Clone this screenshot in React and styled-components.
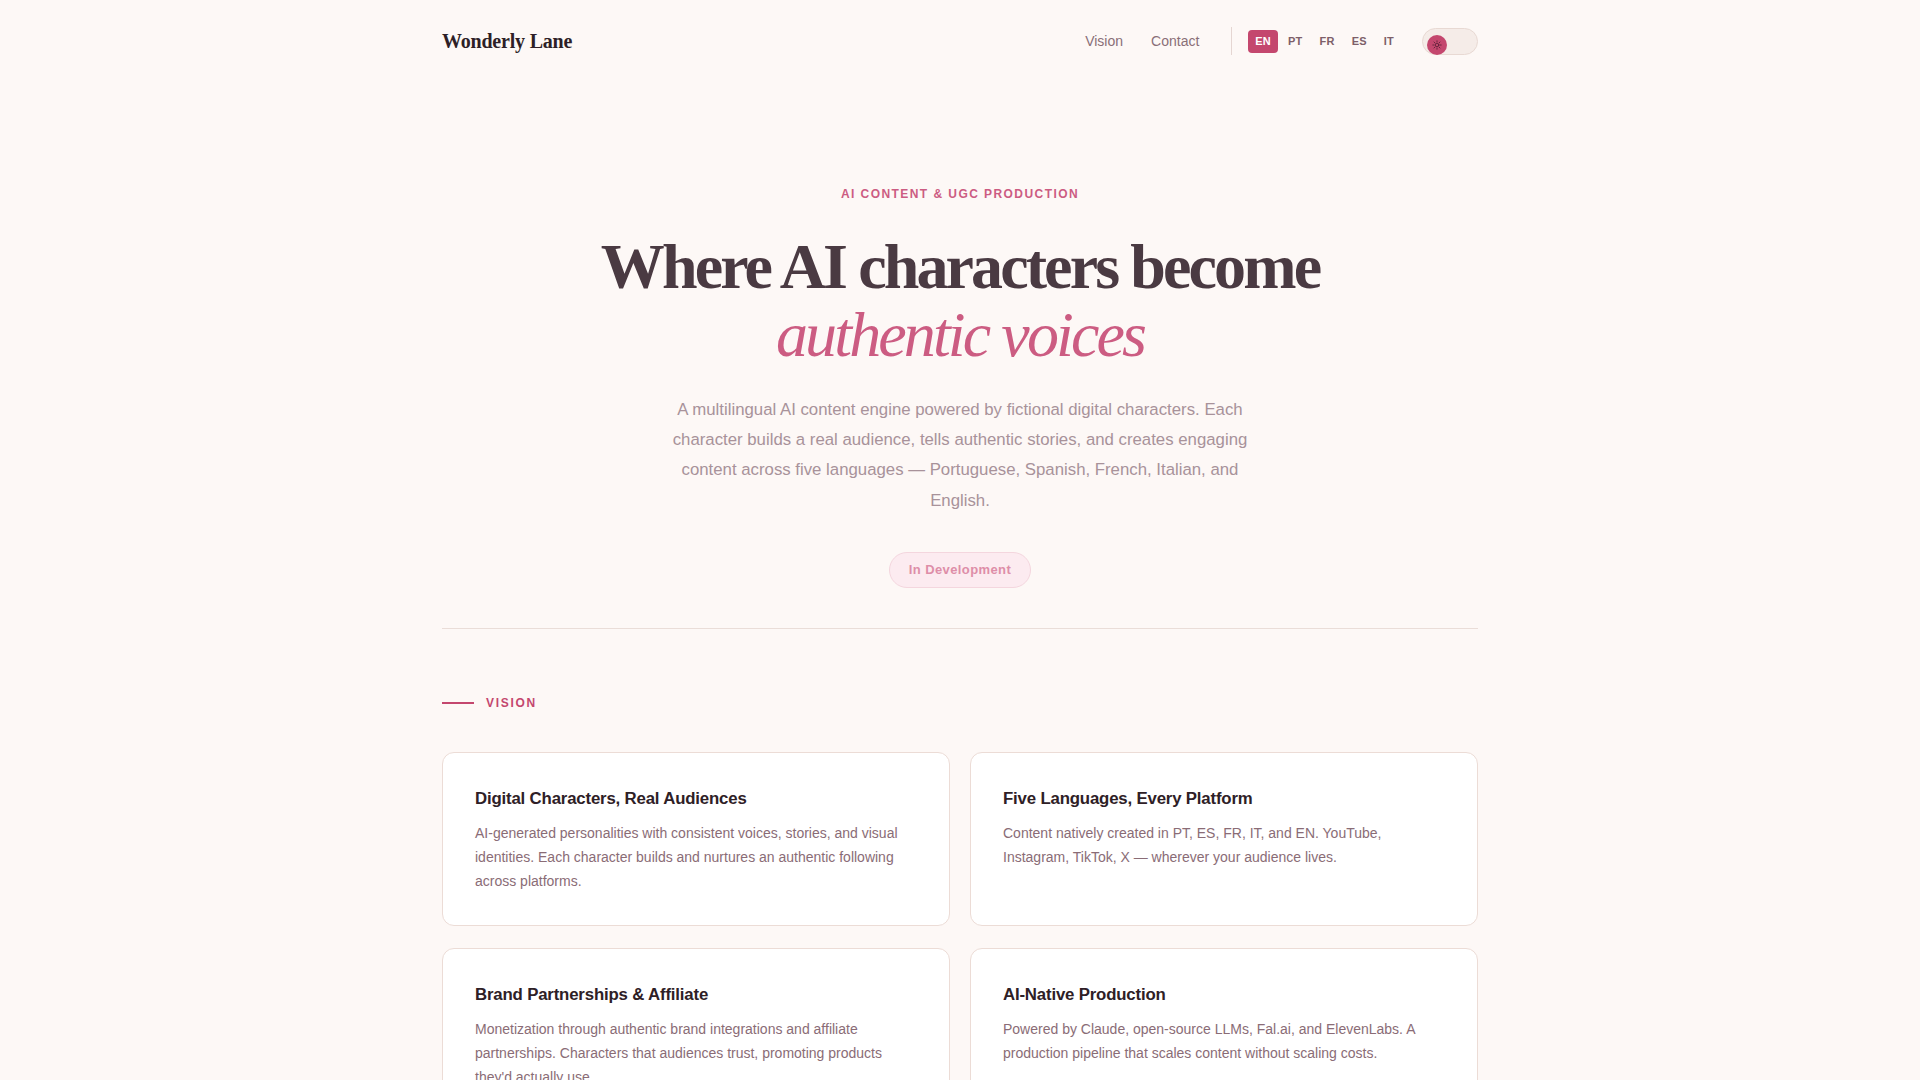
import React, { useState } from 'react'
import styled, { createGlobalStyle } from 'styled-components'

const GlobalStyle = createGlobalStyle`
    html, body {
        margin: 0;
        padding: 0;
        background: #fdf8f6;
    }
    body {
        font-family: 'Liberation Sans', Arial, sans-serif;
        -webkit-font-smoothing: antialiased;
    }
    * {
        box-sizing: border-box;
    }
`

const Page = styled.div`
    min-height: 100vh;
    background: #fdf8f6;
`

const Container = styled.div`
    max-width: 1100px;
    margin: 0 auto;
    padding: 0 32px;
`

const Nav = styled.nav`
    display: flex;
    align-items: center;
    justify-content: space-between;
    padding: 24px 0;
`

const Logo = styled.a`
    font-family: 'Liberation Serif', 'Times New Roman', serif;
    font-weight: 700;
    font-size: 20px;
    line-height: 34px;
    letter-spacing: -0.01em;
    color: #2e1f27;
    text-decoration: none;
`

const NavRight = styled.div`
    display: flex;
    align-items: center;
`

const NavLinks = styled.div`
    display: flex;
    align-items: center;
    gap: 28px;
`

const NavLink = styled.a`
    font-size: 14px;
    color: #8a6f78;
    text-decoration: none;
    cursor: pointer;
`

const NavDivider = styled.span`
    width: 1px;
    height: 28px;
    background: #e5d6d2;
    margin: 0 16px 0 32px;
`

const LangGroup = styled.div`
    display: flex;
    align-items: center;
    gap: 3px;
`

const LangButton = styled.button`
    border: none;
    border-radius: 4px;
    padding: 0 7px;
    height: 23px;
    font-family: 'Liberation Sans', Arial, sans-serif;
    font-size: 11px;
    font-weight: 700;
    letter-spacing: 0.02em;
    cursor: pointer;
    background: ${p => (p.$active ? '#c4476e' : 'transparent')};
    color: ${p => (p.$active ? '#ffffff' : '#7d5f69')};
`

const Toggle = styled.button`
    position: relative;
    width: 56px;
    height: 27px;
    margin-left: 21px;
    border-radius: 14px;
    border: 1px solid #e8d9d3;
    background: #f5ece8;
    padding: 0;
    cursor: pointer;
`

const Knob = styled.span`
    position: absolute;
    left: 4px;
    top: 6px;
    width: 20px;
    height: 20px;
    border-radius: 50%;
    background: #c4476e;
    display: flex;
    align-items: center;
    justify-content: center;
`

const Hero = styled.section`
    text-align: center;
    padding: 103px 0 40px;
    border-bottom: 1px solid #eaddd8;
`

const Eyebrow = styled.div`
    font-size: 12px;
    line-height: 18px;
    font-weight: 700;
    letter-spacing: 0.12em;
    text-transform: uppercase;
    color: #cc5c82;
    margin-bottom: 30px;
`

const Title = styled.h1`
    margin: 0;
    font-family: 'Liberation Serif', 'Times New Roman', serif;
    font-weight: 700;
    font-size: 64px;
    line-height: 1.07;
    letter-spacing: -0.045em;
    color: #4a3a42;
`

const Accent = styled.em`
    display: block;
    font-weight: 400;
    font-style: italic;
    color: #cc5c82;
`

const Lead = styled.p`
    max-width: 600px;
    margin: 25px auto 0;
    font-size: 16.8px;
    line-height: 1.8;
    color: #a8929a;
`

const Badge = styled.span`
    display: inline-block;
    margin-top: 36px;
    padding: 8px 19px;
    border-radius: 999px;
    border: 1px solid #f4d6de;
    background: #fcebf0;
    color: #de8ea8;
    font-size: 13px;
    line-height: 18px;
    font-weight: 700;
    letter-spacing: 0.03em;
`

const Section = styled.section`
    padding: 65px 0 80px;
`

const SectionLabel = styled.div`
    display: flex;
    align-items: center;
    gap: 12px;
    font-size: 12px;
    line-height: 18px;
    font-weight: 700;
    letter-spacing: 0.14em;
    text-transform: uppercase;
    color: #c4476e;
    margin-bottom: 40px;
    &::before {
        content: '';
        width: 32px;
        height: 2px;
        background: #c4476e;
    }
`

const CardGrid = styled.div`
    display: grid;
    grid-template-columns: 1fr 1fr;
    gap: 22px 20px;
`

const Card = styled.article`
    background: #ffffff;
    border: 1px solid #ecdcd6;
    border-radius: 12px;
    padding: 32px;
`

const CardTitle = styled.h3`
    margin: 0 0 8px;
    font-size: 16.8px;
    line-height: 28px;
    font-weight: 700;
    letter-spacing: -0.01em;
    color: #2e2026;
`

const CardText = styled.p`
    margin: 0;
    font-size: 14px;
    line-height: 24px;
    color: #8a6c76;
`

const SunIcon = () => (
    <svg width="10" height="10" viewBox="0 0 10 10" fill="none" stroke="#5e2238" strokeWidth="0.9" strokeLinecap="round">
        <circle cx="5" cy="5" r="1.8" />
        <path d="M5 0.8v1.1M5 8.1v1.1M0.8 5h1.1M8.1 5h1.1M2 2l0.8 0.8M7.2 7.2l0.8 0.8M2 8l0.8-0.8M7.2 2.8L8 2" />
    </svg>
)

const languages = ['EN', 'PT', 'FR', 'ES', 'IT']

const cards = [
    {
        title: 'Digital Characters, Real Audiences',
        text: 'AI-generated personalities with consistent voices, stories, and visual identities. Each character builds and nurtures an authentic following across platforms.',
    },
    {
        title: 'Five Languages, Every Platform',
        text: 'Content natively created in PT, ES, FR, IT, and EN. YouTube, Instagram, TikTok, X — wherever your audience lives.',
    },
    {
        title: 'Brand Partnerships & Affiliate',
        text: "Monetization through authentic brand integrations and affiliate partnerships. Characters that audiences trust, promoting products they'd actually use.",
    },
    {
        title: 'AI-Native Production',
        text: 'Powered by Claude, open-source LLMs, Fal.ai, and ElevenLabs. A production pipeline that scales content without scaling costs.',
    },
]

function App() {
    const [lang, setLang] = useState('EN')

    return (
        <>
            <GlobalStyle />
            <Page>
                <Container>
                    <Nav>
                        <Logo>Wonderly Lane</Logo>
                        <NavRight>
                            <NavLinks>
                                <NavLink>Vision</NavLink>
                                <NavLink>Contact</NavLink>
                            </NavLinks>
                            <NavDivider />
                            <LangGroup>
                                {languages.map(l => (
                                    <LangButton key={l} $active={l === lang} onClick={() => setLang(l)}>
                                        {l}
                                    </LangButton>
                                ))}
                            </LangGroup>
                            <Toggle aria-label="Toggle theme">
                                <Knob>
                                    <SunIcon />
                                </Knob>
                            </Toggle>
                        </NavRight>
                    </Nav>

                    <Hero>
                        <Eyebrow>AI Content &amp; UGC Production</Eyebrow>
                        <Title>
                            Where AI characters become
                            <Accent>authentic voices</Accent>
                        </Title>
                        <Lead>
                            A multilingual AI content engine powered by fictional digital characters. Each character
                            builds a real audience, tells authentic stories, and creates engaging content across five
                            languages — Portuguese, Spanish, French, Italian, and English.
                        </Lead>
                        <Badge>In Development</Badge>
                    </Hero>

                    <Section>
                        <SectionLabel>Vision</SectionLabel>
                        <CardGrid>
                            {cards.map(c => (
                                <Card key={c.title}>
                                    <CardTitle>{c.title}</CardTitle>
                                    <CardText>{c.text}</CardText>
                                </Card>
                            ))}
                        </CardGrid>
                    </Section>
                </Container>
            </Page>
        </>
    )
}

export default App
